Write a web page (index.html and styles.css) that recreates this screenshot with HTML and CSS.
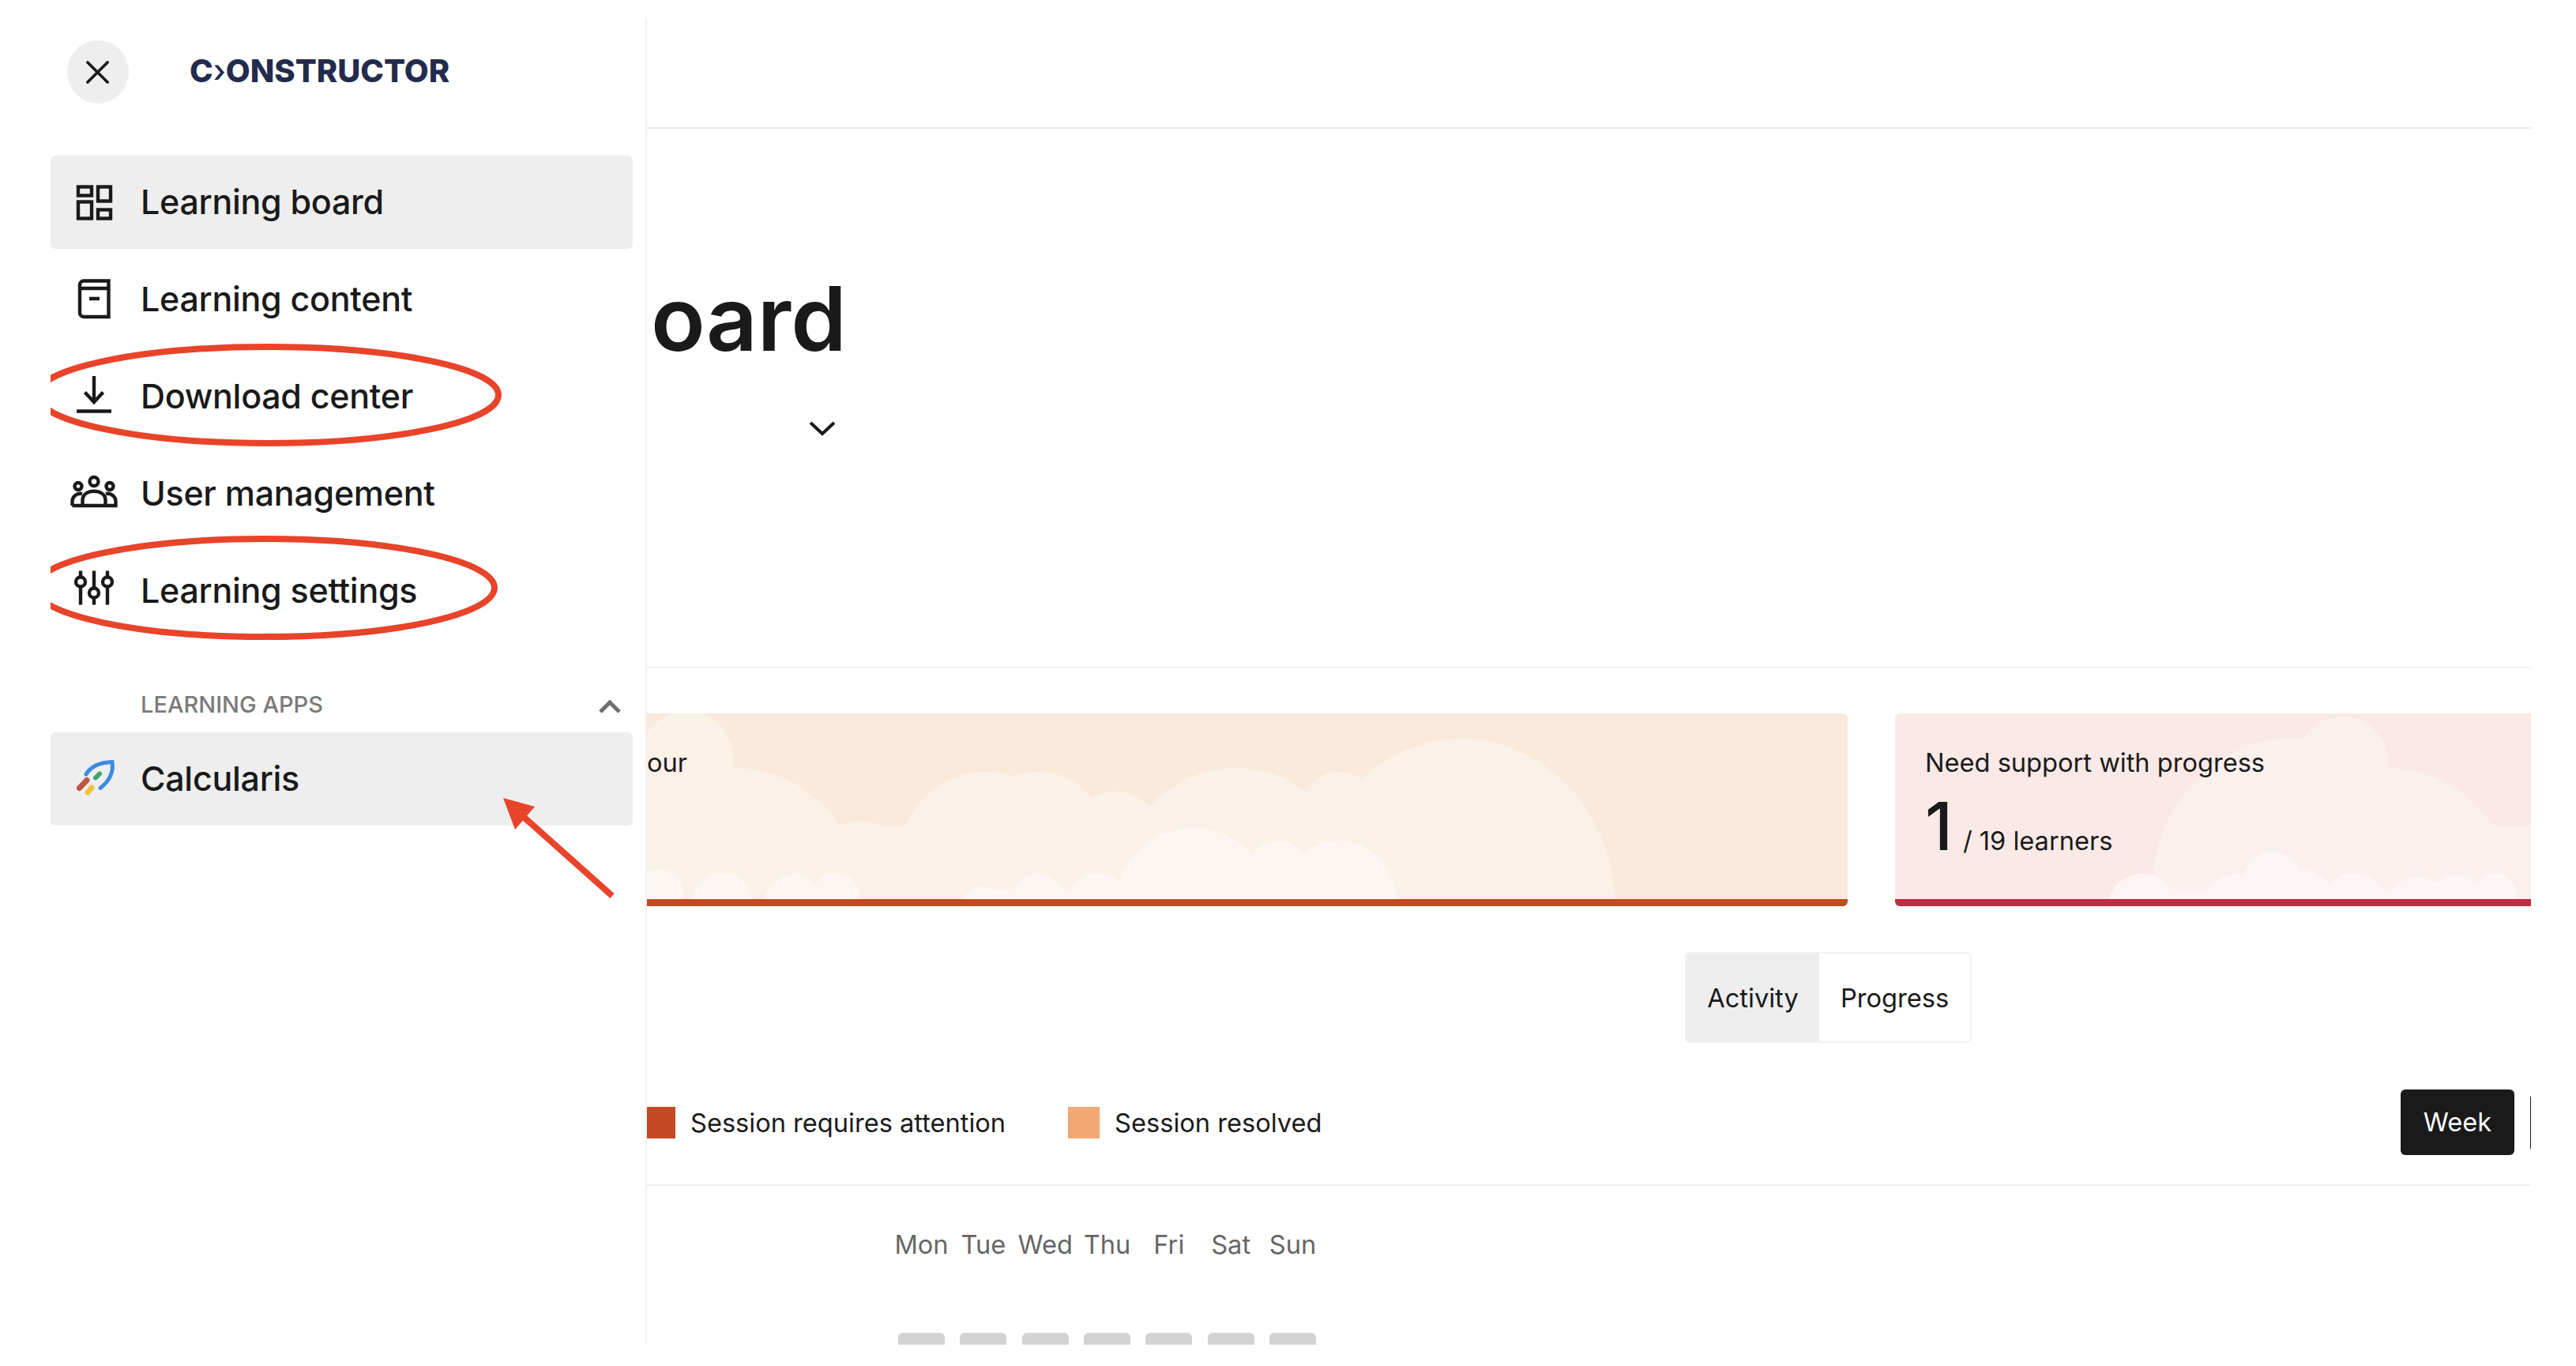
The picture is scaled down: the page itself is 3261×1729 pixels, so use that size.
FILE: index.html
```html
<!DOCTYPE html>
<html lang="en">
<head>
<meta charset="utf-8">
<title>Learning board</title>
<link rel="stylesheet" href="styles.css">
</head>
<body>
<div class="app">
  <aside class="sidebar">
    <div class="brand">
      <button class="close" aria-label="Close">
        <svg class="close-icon" viewBox="0 0 30 30"><path d="M2 2 L28 28 M28 2 L2 28"/></svg>
      </button>
      <span class="logo">C<span class="logo-mark">›</span>ONSTRUCTOR</span>
    </div>
    <nav class="nav">
      <a class="item active">
        <svg class="icon" viewBox="0 0 60 60"><rect x="10" y="11.500" width="17" height="11"/><rect x="35" y="11.500" width="16" height="18"/><rect x="10" y="30.500" width="17" height="21"/><rect x="35" y="40.500" width="16" height="11"/></svg>
        <span>Learning board</span>
      </a>
      <a class="item">
        <svg class="icon" viewBox="0 0 60 60"><path d="M48.500 7.500 H17 a5 5 0 0 0 -5 5 V48 a5 5 0 0 0 5 5 H48.500 Z M12 17 H48.500 M24 30 H37"/></svg>
        <span>Learning content</span>
      </a>
      <a class="item">
        <svg class="icon" viewBox="0 0 60 60"><path d="M30 5 V38 M18.500 25.500 L30 38 L41.500 25.500 M8 49.500 H52"/></svg>
        <span>Download center</span>
      </a>
      <a class="item">
        <svg class="icon" viewBox="0 0 60 60"><circle cx="30" cy="15.500" r="5.500"/><circle cx="10" cy="21.500" r="4.500"/><circle cx="50" cy="21.500" r="4.500"/><path d="M2.500 46 H57.500 V41 C57.500 33 50 30 45 31 M2.500 46 V41 C2.500 33 10 30 15 31 M15.500 46 V39 C15.500 24 44.500 24 44.500 39 V46"/></svg>
        <span>User management</span>
      </a>
      <a class="item">
        <svg class="icon" viewBox="0 0 60 60"><path d="M13 5.500 V48.500 M30 5.500 V48.500 M47 5.500 V48.500"/><circle class="knob" cx="13" cy="19.500" r="6"/><circle class="knob" cx="30" cy="33.500" r="6"/><circle class="knob" cx="47" cy="19.500" r="6"/></svg>
        <span>Learning settings</span>
      </a>
    </nav>
    <div class="apps-head">
      <span>LEARNING APPS</span>
      <svg class="apps-chevron" viewBox="0 0 28 18"><path d="M2 15 L14 3 L26 15"/></svg>
    </div>
    <a class="item active">
      <svg class="rocket" viewBox="0 0 60 60">
        <path class="r-blue" d="M20 25 C26 15 38 10 53 9.500 C55 22 50 33 38 42.500"/>
        <path class="r-red" d="M11.500 42.500 L21 32.500"/>
        <path class="r-yellow" d="M22 48 L27 42"/>
        <path class="r-green" d="M32 29.500 L37 24.500"/>
      </svg>
      <span>Calcularis</span>
    </a>
  </aside>

  <main class="main">
    <header class="topbar"></header>
    <section class="hero">
      <h1 class="title">oard</h1>
      <svg class="hero-chevron" viewBox="0 0 34 20"><path d="M2 3 L17 17 L32 3"/></svg>
    </section>
    <section class="cards">
      <article class="card card-orange">
        <svg class="clouds" viewBox="819 903 1520 235" preserveAspectRatio="none">
          <g class="c-mid-o">
            <circle cx="869" cy="961" r="60"/><circle cx="930" cy="1130" r="158"/><circle cx="820" cy="1130" r="158"/>
            <circle cx="1090" cy="1100" r="60"/><circle cx="1250" cy="1090" r="113"/><circle cx="1315" cy="1060" r="83"/>
            <circle cx="1412" cy="1060" r="58"/><circle cx="1565" cy="1120" r="148"/><circle cx="1695" cy="1027" r="50"/>
            <ellipse cx="1850" cy="1150" rx="195" ry="215"/><rect x="819" y="1044" width="1100" height="100"/>
          </g>
          <g class="c-low-o">
            <circle cx="1511" cy="1148" r="100"/><circle cx="1619" cy="1104" r="40"/><ellipse cx="1695" cy="1140" rx="73" ry="76"/>
            <circle cx="835" cy="1130" r="30"/><circle cx="915" cy="1145" r="40"/><circle cx="1005" cy="1145" r="38"/>
            <circle cx="1058" cy="1135" r="30"/><circle cx="1244" cy="1150" r="28"/><circle cx="1313" cy="1140" r="34"/><circle cx="1390" cy="1145" r="40"/><rect x="1240" y="1125" width="300" height="20"/>
          </g>
        </svg>
        <span class="card-label">our</span>
      </article>
      <article class="card card-red">
        <svg class="clouds" viewBox="2399 903 805 235" preserveAspectRatio="none">
          <g class="c-mid-r">
            <circle cx="2965" cy="965" r="58"/><ellipse cx="2902" cy="1130" rx="178" ry="196"/><circle cx="3022" cy="1130" r="158"/><rect x="2900" y="1044" width="320" height="100"/>
          </g>
          <g class="c-low-r">
            <circle cx="2712" cy="1150" r="44"/><circle cx="2829" cy="1145" r="38"/><circle cx="2877" cy="1115" r="37"/><circle cx="2917" cy="1140" r="38"/><circle cx="2980" cy="1145" r="40"/><circle cx="3060" cy="1150" r="40"/><circle cx="3110" cy="1145" r="38"/><circle cx="3158" cy="1135" r="29"/><rect x="2712" y="1125" width="450" height="20"/>
          </g>
        </svg>
        <span class="card-text">Need support with progress</span>
        <div class="metric"><span class="metric-num">1</span><span class="metric-rest">/ 19 learners</span></div>
      </article>
    </section>
    <div class="tabs">
      <span class="tab tab-on">Activity</span>
      <span class="tab">Progress</span>
    </div>
    <div class="legend-row">
      <div class="legend">
        <span class="swatch swatch-red"></span><span class="legend-text">Session requires attention</span>
        <span class="swatch swatch-orange"></span><span>Session resolved</span>
      </div>
      <div class="range">
        <span class="range-btn">Week</span>
        <span class="range-btn range-next"></span>
      </div>
    </div>
    <div class="calendar">
      <div class="week week-head">
        <span>Mon</span><span>Tue</span><span>Wed</span><span>Thu</span><span>Fri</span><span>Sat</span><span>Sun</span>
      </div>
      <div class="week week-cells">
        <i></i><i></i><i></i><i></i><i></i><i></i><i></i>
      </div>
    </div>
  </main>

  <svg class="marks" viewBox="64 0 755 1702" aria-hidden="true">
    <ellipse cx="339" cy="500" rx="292" ry="61"/>
    <ellipse cx="335" cy="744" rx="291" ry="62"/>
    <path d="M775 1134 L655 1027"/>
    <polygon class="arrow-head" points="637,1010 677,1021 652,1050"/>
  </svg>
</div>
</body>
</html>
```

FILE: styles.css
```css
* { box-sizing: border-box; }

html, body { margin: 0; padding: 0; background: #fff; }

body {
  font-family: Inter, "Liberation Sans", sans-serif;
  color: #1a1a1a;
}

.app {
  position: relative;
  display: flex;
  width: 3204px;
  height: 1702px;
  overflow: hidden;
}

/* Sidebar */
.sidebar {
  flex: 0 0 819px;
  margin-top: 23px;
  padding: 28px 16px 0 64px;
  border-right: 2px solid #f1f1f1;
}

.brand {
  display: flex;
  align-items: center;
  height: 80px;
  padding-left: 21px;
  margin-bottom: 66px;
}

.close {
  display: flex;
  align-items: center;
  justify-content: center;
  width: 78px;
  height: 80px;
  padding: 0;
  border: 0;
  border-radius: 50%;
  background: #eeeeee;
}

.close-icon {
  width: 29px;
  height: 29px;
  margin-left: -2px;
  fill: none;
  stroke: #1a1a1a;
  stroke-width: 3.8;
  stroke-linecap: round;
}

.logo {
  margin-left: 77px;
  padding-bottom: 3px;
  font-size: 40px;
  font-weight: 800;
  letter-spacing: 0;
  color: #232b4d;
  white-space: nowrap;
}

.logo-mark {
  font-weight: 500;
}

.nav {
  display: flex;
  flex-direction: column;
  gap: 5px;
}

.item {
  display: flex;
  align-items: center;
  gap: 29px;
  height: 118px;
  padding: 0 0 3px 25px;
  border-radius: 6px;
  font-size: 43px;
  letter-spacing: -0.3px;
  font-weight: 500;
  color: #1a1a1a;
}

.item.active { background: #eeeeee; }

.icon {
  flex: none;
  width: 60px;
  height: 60px;
  fill: none;
  stroke: #1a1a1a;
  stroke-width: 4.4;
}

.knob { fill: #fff; }

.rocket {
  flex: none;
  width: 60px;
  height: 60px;
  fill: none;
  stroke-linecap: round;
}

.r-blue { stroke: #3b8be0; stroke-width: 5; }
.r-red { stroke: #c0553f; stroke-width: 7; }
.r-yellow { stroke: #f2c23e; stroke-width: 7; }
.r-green { stroke: #3fa56f; stroke-width: 6; }

.apps-head {
  display: flex;
  align-items: center;
  justify-content: space-between;
  height: 60px;
  margin-top: 54px;
  margin-bottom: 6px;
  padding: 0 15px 0 114px;
  font-size: 29px;
  font-weight: 500;
  color: #7a7a7a;
}

.apps-chevron {
  width: 28px;
  height: 18px;
  margin-top: 8px;
  fill: none;
  stroke: #6f6f6f;
  stroke-width: 5;
}

/* Main */
.main {
  flex: 1;
  min-width: 0;
  overflow: hidden;
}

.topbar {
  height: 163px;
  border-bottom: 2px solid #eeeeee;
}

.hero {
  position: relative;
  height: 683px;
  padding: 175px 0 0 5px;
  border-bottom: 2px solid #f1f1f1;
}

.title {
  margin: 0;
  font-size: 113px;
  line-height: 130px;
  font-weight: 600;
  color: #1a1a1a;
}

.hero-chevron {
  position: absolute;
  left: 205px;
  top: 369px;
  width: 34px;
  height: 20px;
  fill: none;
  stroke: #1a1a1a;
  stroke-width: 4;
}

.cards {
  display: flex;
  gap: 60px;
  padding-top: 57px;
}

.card {
  position: relative;
  height: 244px;
  border-bottom: 9px solid;
  border-radius: 6px;
  overflow: hidden;
}

.card-orange {
  flex: 0 0 1520px;
  border-radius: 0 6px 6px 0;
  background: #faeadc;
  border-bottom-color: #c24a24;
  font-size: 32.600px;
}

.card-red {
  flex: 0 0 805px;
  border-radius: 6px 0 0 6px;
  background: #fae9e6;
  border-bottom-color: #c02c43;
  font-size: 32.600px;
}

.clouds {
  position: absolute;
  left: 0;
  top: 0;
  width: 100%;
  height: 235px;
}

.c-mid-o { fill: #faf1e8; }
.c-low-o { fill: #fcf7f2; }
.c-mid-r { fill: #faf0ed; }
.c-low-r { fill: #fdf6f4; }

.card-label,
.card-text,
.metric {
  position: relative;
  display: block;
}

.card-label {
  padding-top: 42px;
  line-height: 40px;
}

.card-text {
  padding: 42px 0 0 38px;
  line-height: 40px;
}

.metric {
  display: flex;
  align-items: baseline;
  padding-left: 38px;
  line-height: 92px;
  margin-top: 15px;
}

.metric-num {
  font-size: 84px;
  font-weight: 500;
}

.metric-rest {
  margin-left: 13px;
  font-size: 32.600px;
}

.tabs {
  display: flex;
  width: 363px;
  height: 115px;
  margin: 58px 0 0 1314px;
  border: 2px solid #f1f1f1;
  border-radius: 6px;
  overflow: hidden;
  font-size: 32.600px;
}

.tab {
  display: flex;
  align-items: center;
  justify-content: center;
  flex: 1;
}

.tab-on {
  flex: 0 0 168px;
  background: #eeeeee;
}

.legend-row {
  display: flex;
  align-items: center;
  justify-content: space-between;
  height: 83px;
  margin-top: 59px;
  font-size: 32.600px;
}

.legend {
  display: flex;
  align-items: center;
}

.swatch {
  flex: none;
  height: 40px;
}

.swatch-red {
  width: 36px;
  margin-right: 19px;
  background: #c24a24;
}

.swatch-orange {
  width: 40px;
  margin-right: 19px;
  background: #f2a873;
}

.legend-text { margin-right: 79px; }

.range {
  display: flex;
  flex: none;
  align-items: center;
  gap: 20px;
  margin-right: -143px;
}

.range-btn {
  display: flex;
  align-items: center;
  justify-content: center;
  width: 144px;
  height: 83px;
  padding-bottom: 2px;
  border-radius: 6px;
  background: #1a1a1a;
  color: #fff;
}

.range-next {
  height: 74px;
}

.calendar {
  margin-top: 37px;
  padding: 54px 0 0 318px;
  border-top: 2px solid #eeeeee;
}

.week {
  display: grid;
  grid-template-columns: repeat(7, 59px);
  column-gap: 19.330px;
  width: 530px;
}

.week-head {
  font-size: 32.600px;
  line-height: 40px;
  color: #666666;
}

.week-head span {
  display: flex;
  justify-content: center;
}

.week-cells {
  margin-top: 92px;
}

.week-cells i {
  display: block;
  height: 60px;
  border-radius: 6px;
  background: #d3d3d3;
}

/* Annotation layer */
.marks {
  position: absolute;
  left: 64px;
  top: 0;
  width: 755px;
  height: 1702px;
  pointer-events: none;
}

.marks ellipse,
.marks path {
  fill: none;
  stroke: #e8442a;
  stroke-width: 8;
}

.arrow-head { fill: #e8442a; }
```
